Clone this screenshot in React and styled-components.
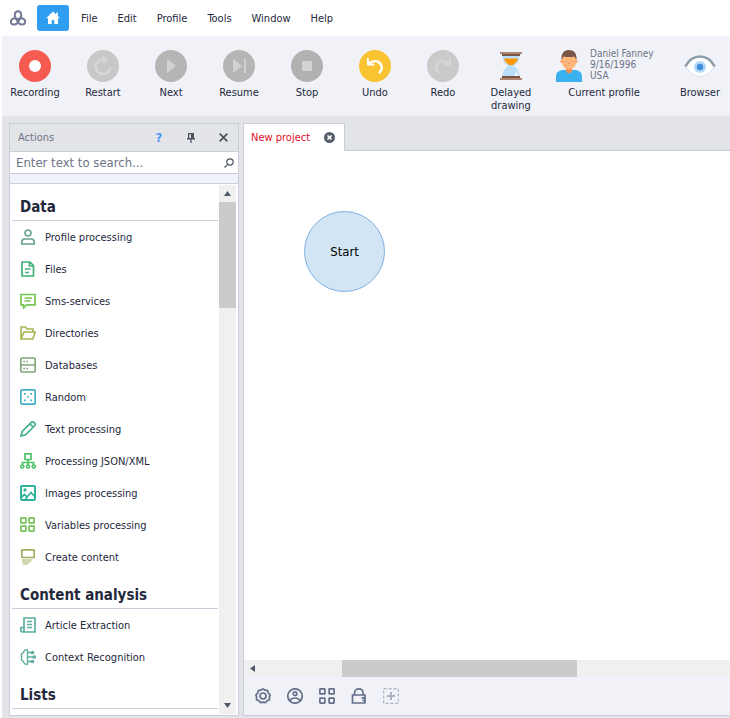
import React from 'react';
import styled, { createGlobalStyle } from 'styled-components';

const GlobalStyle = createGlobalStyle`
  * {
    box-sizing: border-box;
  }
  body {
    margin: 0;
    background: #fff;
    color: #24283c;
    font-family: 'DejaVu Sans Condensed', 'Noto Sans', sans-serif;
    font-size: 11px;
    line-height: 14px;
  }
  button,
  input {
    margin: 0;
    padding: 0;
    border: 0;
    background: none;
    color: inherit;
    font: inherit;
  }
  svg {
    display: block;
    flex: none;
  }
`;

const Page = styled.div`
  display: flex;
  flex-direction: column;
  height: 100vh;
  padding-left: 2px;
  overflow: hidden;
`;

const MenuBar = styled.nav`
  display: flex;
  align-items: center;
  flex: none;
  height: 36px;
  padding-left: 8px;
`;

const HomeButton = styled.button`
  display: flex;
  align-items: center;
  justify-content: center;
  width: 32px;
  height: 26px;
  margin: 0 2px 0 11px;
  border-radius: 3px;
  background: #2f9df0;
`;

const MenuItem = styled.button`
  padding: 1px 10px 0;
`;

const Toolbar = styled.header`
  display: flex;
  gap: 8px;
  flex: none;
  height: 80px;
  padding: 14px 0 0 3px;
  background: #f1f2f7;
  overflow: hidden;
`;

const Tool = styled.button`
  display: flex;
  flex-direction: column;
  align-items: center;
  gap: 4px;
  flex: none;
  width: ${p => p.$width || 60}px;
  height: 64px;
  line-height: 13px;
`;

const Profile = styled.span`
  display: flex;
  gap: 8px;
  align-self: flex-start;
  height: 32px;
  padding-left: 7px;
  color: #6d7488;
  font-size: 10px;
  line-height: 11px;
  text-align: left;
  white-space: nowrap;
`;

const ProfileText = styled.span`
  margin-top: -2px;
`;

const Workspace = styled.main`
  display: flex;
  flex: 1;
  gap: 4px;
  min-height: 0;
  padding: 7px 0 2px 7px;
  background: #e3e4e8;
`;

const Panel = styled.aside`
  display: flex;
  flex-direction: column;
  flex: none;
  width: 230px;
  border: 1px solid #c9cddc;
  background: #f1f2f7;
`;

const PanelTitle = styled.div`
  display: flex;
  align-items: center;
  flex: none;
  height: 27px;
  padding: 0 7px 0 8px;
  background: #e3e4e8;
  color: #6d7488;
`;

const PanelName = styled.span`
  flex: 1;
`;

const PanelButton = styled.button`
  display: flex;
  align-items: center;
  justify-content: center;
  width: 16px;
  height: 16px;
  margin-left: 16px;
  color: ${p => p.$color || '#4b535f'};
  font-size: 13px;
  font-weight: bold;
`;

const Search = styled.div`
  display: flex;
  align-items: center;
  flex: none;
  height: 23px;
  margin-bottom: 9px;
  padding: 0 4px 0 6px;
  border: 1px solid #c9cddc;
  border-width: 1px 0;
  background: #fff;
`;

const SearchInput = styled.input`
  flex: 1;
  min-width: 0;
  outline: 0;
  font-size: 13px;
  &::placeholder {
    color: #6d7488;
    opacity: 1;
  }
`;

const List = styled.div`
  display: flex;
  flex: 1;
  min-height: 0;
  padding: 1px 1px 1px 2px;
  border-top: 1px solid #c9cddc;
  background: #fff;
`;

const Groups = styled.div`
  flex: 1;
  overflow: hidden;
`;

const GroupName = styled.h2`
  height: 36px;
  margin: 0 1px 0 0;
  padding: 12px 0 0 8px;
  border-bottom: 1px solid #c9cddc;
  font-size: 15px;
  line-height: 20px;
`;

const Action = styled.button`
  display: flex;
  align-items: center;
  gap: 9px;
  width: 100%;
  height: 32px;
  padding-left: 8px;
`;

const ActionName = styled.span`
  padding-top: 1px;
`;

const VerticalBar = styled.div`
  display: flex;
  flex-direction: column;
  justify-content: space-between;
  width: 17px;
  margin-right: 1px;
  background: #f0f0f0;
`;

const ScrollButton = styled.button`
  display: flex;
  align-items: center;
  justify-content: center;
  flex: none;
  width: 17px;
  height: 17px;
  color: #4f5868;
`;

const VerticalThumb = styled.div`
  height: 20%;
  margin-bottom: auto;
  background: #cbcbcb;
`;

const Editor = styled.section`
  display: flex;
  flex-direction: column;
  flex: 1;
  min-width: 0;
`;

const Tabs = styled.div`
  display: flex;
  flex: none;
  height: 28px;
`;

const Tab = styled.div`
  display: flex;
  align-items: center;
  justify-content: space-between;
  width: 102px;
  padding: 0 9px 0 7px;
  border: 1px solid #c9cddc;
  border-bottom: 0;
  background: #fff;
  color: #e0102d;
`;

const TabRest = styled.div`
  flex: 1;
  border-bottom: 1px solid #c9cddc;
`;

const Canvas = styled.div`
  position: relative;
  flex: 1;
  border-left: 1px solid #c9cddc;
  background: #fff;
`;

const Node = styled.div`
  position: absolute;
  top: 60px;
  left: 60px;
  display: flex;
  align-items: center;
  justify-content: center;
  width: 81px;
  height: 81px;
  border: 1px solid #7fb0e2;
  border-radius: 50%;
  background: #d2e5f5;
  color: #000;
  font-size: 13px;
`;

const HorizontalBar = styled.div`
  display: flex;
  flex: none;
  height: 17px;
  border-left: 1px solid #c9cddc;
  background: #f0f0f0;
`;

const HorizontalThumb = styled.div`
  width: 235px;
  margin-left: 81px;
  background: #cbcbcb;
`;

const BottomBar = styled.footer`
  display: flex;
  align-items: center;
  gap: 16px;
  flex: none;
  height: 39px;
  padding-left: 11px;
  border: 1px solid #c9cddc;
  border-width: 0 0 1px 1px;
  background: #f1f2f7;
  color: #64708a;
`;

const Svg = ({ size = 16, box = 16, color = 'currentColor', width = 1.7, children }) => (
  <svg
    width={size}
    height={size}
    viewBox={`0 0 ${box} ${box}`}
    fill="none"
    stroke={color}
    strokeWidth={width}
    aria-hidden="true"
  >
    {children}
  </svg>
);

const Round = ({ color, children }) => (
  <Svg size={32} box={32} color="none">
    <circle cx="16" cy="16" r="16" fill={color} />
    {children}
  </Svg>
);

const Logo = () => (
  <Svg color="#727a94" width={2}>
    <path d="M8 11C5.600 9 4.500 6.500 4.900 4.200 5.500.4 10.500.4 11.100 4.200 11.500 6.500 10.400 9 8 11Z" />
    <path d="M9 9.800C8 13 5.800 14.800 3.600 14.600.5 14.400.1 11 2 9.200 3.700 7.800 6.500 8 9 9.800Z" />
    <path d="M7 9.800C8 13 10.200 14.800 12.400 14.600 15.500 14.400 15.900 11 14 9.200 12.300 7.800 9.500 8 7 9.800Z" />
  </Svg>
);

const tools = [
  {
    name: 'Recording',
    icon: (
      <Round color="#f65b51">
        <circle cx="16" cy="16" r="6" fill="#fff" />
      </Round>
    ),
  },
  {
    name: 'Restart',
    icon: (
      <Round color="#c8c8c8">
        <path d="M17 9.500A7.300 7.300 0 1 0 23.300 17" stroke="#d7d7d7" strokeWidth="2.500" />
        <path d="M15.500 5.500l6 4.500-6 4z" fill="#d7d7d7" />
      </Round>
    ),
  },
  {
    name: 'Next',
    icon: (
      <Round color="#b5b5b5">
        <path d="M12.500 9.500v13L20.500 16z" fill="#d2d2d2" stroke="#d2d2d2" strokeLinejoin="round" strokeWidth="1" />
      </Round>
    ),
  },
  {
    name: 'Resume',
    icon: (
      <Round color="#b5b5b5">
        <path d="M10.500 9.500v13L18.500 16z" fill="#d2d2d2" stroke="#d2d2d2" strokeLinejoin="round" strokeWidth="1" />
        <path d="M21 9h2v14h-2z" fill="#d2d2d2" />
      </Round>
    ),
  },
  {
    name: 'Stop',
    icon: (
      <Round color="#b1b1b1">
        <rect x="11" y="11" width="10" height="10" fill="#d2d2d2" />
      </Round>
    ),
  },
  {
    name: 'Undo',
    icon: (
      <Round color="#fac332">
        <path d="M10 13.500C13.500 10.800 18 10.300 20.800 13c3 3 2.500 7.500-.8 10.300" stroke="#fff" strokeWidth="2.500" />
        <path d="M8 8v7.500h7.500v-1.800l-5.200-.5L9.800 8z" fill="#fff" />
      </Round>
    ),
  },
  {
    name: 'Redo',
    icon: (
      <Round color="#cacaca">
        <path d="M22 13.500C18.500 10.800 14 10.300 11.200 13c-3 3-2.500 7.500.8 10.300" stroke="#d6d6d6" strokeWidth="2.500" />
        <path d="M24 8v7.500h-7.500v-1.800l5.200-.5.500-5.200z" fill="#d6d6d6" />
      </Round>
    ),
  },
  {
    name: 'Delayed drawing',
    icon: (
      <Svg size={32} box={32} color="none">
        <path d="M7.500 6h17c0 5-2 7.500-6 10 4 2.500 6 5 6 10h-17c0-5 2-7.500 6-10-4-2.500-6-5-6-10z" fill="#bbdefb" />
        <path d="M9 8.500h14c-.5 3-3 4.500-5 6.500h-4c-2-2-4.500-3.500-5-6.500z" fill="#ff9800" />
        <path d="M21.500 20l2 6h-4z" fill="#eaf5ff" />
        <path d="M5 2h22v2H5zM5 28h22v2H5z" fill="#b08570" />
        <path d="M7 4h18v2H7zM7 26h18v2H7z" fill="#795548" />
      </Svg>
    ),
  },
  {
    name: 'Current profile',
    width: 110,
    icon: (
      <Profile>
        <svg width="26" height="32" viewBox="0 0 26 32" aria-hidden="true">
          <path d="M0 32v-5c0-5 3-7 8-7h10c5 0 8 2 8 7v5z" fill="#3bb1f0" />
          <path d="M10 17h6v4c0 3-6 3-6 0z" fill="#f18e55" />
          <path d="M6 5h14v7c0 4-3 7.500-7 7.500S6 16 6 12z" fill="#ffb77c" />
          <circle cx="5.800" cy="11.500" r="1.600" fill="#ffa56c" />
          <circle cx="20.200" cy="11.500" r="1.600" fill="#ffa56c" />
          <path d="M5.500 10C5 4 7.500 0 13 0s8 4 7.500 10l-2-3.500c-4 1-8 .5-11 0z" fill="#795548" />
          <path d="M9.500 11h1.200v1H9.500zM15.500 11h1.200v1h-1.200zM12.500 13h1v1h-1zM9.500 15h1v1h-1z" fill="#e58a58" />
        </svg>
        <ProfileText>
          Daniel Fanney
          <br />
          9/16/1996
          <br />
          USA
        </ProfileText>
      </Profile>
    ),
  },
  {
    name: 'Browser',
    width: 66,
    icon: (
      <Svg size={32} box={32} color="none">
        <path d="M2 17C6 10 11 7.500 16 7.500S26 10 30 17c-4 6.500-9 9.500-14 9.500S6 23.500 2 17z" fill="#fff" stroke="#d8dde4" strokeWidth="1" />
        <circle cx="16" cy="17" r="6" fill="#b3dafa" />
        <circle cx="16" cy="17" r="3.200" fill="#3f8fdc" />
        <path d="M1.300 16.500C5 9.500 10.500 6.500 16 6.500s11 3 14.700 10" stroke="#8f9fab" strokeWidth="2.600" />
      </Svg>
    ),
  },
];

const groups = [
  {
    name: 'Data',
    actions: [
      {
        name: 'Profile processing',
        color: '#68a48f',
        icon: (
          <>
            <circle cx="8" cy="4" r="3" />
            <path d="M1.800 15v-2c0-2 1-3 3-3h6.400c2 0 3 1 3 3v2z" />
          </>
        ),
      },
      {
        name: 'Files',
        color: '#41b377',
        icon: <path d="M2 1h8l3.500 3.500V15H2zM9.500 1v4h4M5 8h5.500M5 11.500h4" />,
      },
      {
        name: 'Sms-services',
        color: '#76c653',
        icon: <path d="M1 1.500h14v10.300H6.500L3.500 15v-3.200H1zM4.500 5h7.500M4.500 8h6" />,
      },
      {
        name: 'Directories',
        color: '#a3b957',
        icon: <path d="M1 14V2h4.500l1.500 2h6v3M1 14l3-7h11.200l-2.500 7z" />,
      },
      {
        name: 'Databases',
        color: '#83a77a',
        icon: (
          <>
            <rect x=".8" y="1" width="14.400" height="14" rx="1.500" />
            <path d="M1 8h14M3.300 4.500H5M6.300 4.500H8M3.300 11.500H5M6.300 11.500H8" />
          </>
        ),
      },
      {
        name: 'Random',
        color: '#41b0c3',
        icon: (
          <>
            <rect x=".8" y=".8" width="14.400" height="14.400" rx="1.500" />
            <path d="M4 4.800h1.700M10.300 4.800H12M7.100 8h1.800M4 11.300h1.700M10.300 11.300H12" />
          </>
        ),
      },
      {
        name: 'Text processing',
        color: '#43b08d',
        icon: <path d="M1 15l1.200-4.500L11.500 1.200c.8-.6 1.700-.5 2.400.2l.7.700c.7.700.8 1.600.2 2.400L5.500 13.800zM10 3l3 3" />,
      },
      {
        name: 'Processing JSON/XML',
        color: '#50c268',
        icon: (
          <>
            <path d="M5 .8h6v5.700H5zM8 6.500V12M2.500 12V9.500h11V12" />
            <circle cx="2.300" cy="13.500" r="1.500" />
            <circle cx="8" cy="13.500" r="1.500" />
            <circle cx="13.700" cy="13.500" r="1.500" />
          </>
        ),
      },
      {
        name: 'Images processing',
        color: '#2eb39b',
        icon: (
          <>
            <rect x="1" y="1" width="14" height="14" rx="1" strokeWidth="2" />
            <circle cx="5" cy="5" r=".8" />
            <path d="M1 12.500L4.500 9.500 7 12l4-4.500 4 4.500M5 15l2-3" />
          </>
        ),
      },
      {
        name: 'Variables processing',
        color: '#75c356',
        icon: (
          <>
            <rect x=".9" y=".9" width="5" height="5" rx=".5" />
            <rect x="9.100" y=".9" width="5" height="5" rx=".5" />
            <rect x=".9" y="9.100" width="5" height="5" rx=".5" />
            <rect x="9.100" y="9.100" width="5" height="5" rx=".5" />
          </>
        ),
      },
      {
        name: 'Create content',
        color: '#a2ad61',
        icon: (
          <>
            <rect x="1.800" y=".8" width="12.400" height="7.700" rx=".5" />
            <path d="M2 11h10.500M2 13h8.500M3 15h5" strokeWidth="1.200" />
          </>
        ),
      },
    ],
  },
  {
    name: 'Content analysis',
    actions: [
      {
        name: 'Article Extraction',
        color: '#5aaf9c',
        icon: <path d="M4 10V1h11v14H3C.5 15 .8 13.500 .8 10.500H4V15M7 4.500h5M7 7.500h5M7 10.500h5" />,
      },
      {
        name: 'Context Recognition',
        color: '#5fae9e',
        icon: (
          <>
            <path
              d="M8 1C5.500.2 3.800 1.500 3.500 3.500 1.500 4.300.8 6 1.800 8 .8 10 1.500 11.800 3.500 12.500 3.800 14.700 5.500 15.800 8 15M7.500 .5v15M8 3.500h3.500M8 8h5M8 12.500h3.500"
              strokeWidth="1.400"
            />
            <circle cx="12.500" cy="3.500" r="1" />
            <circle cx="14.200" cy="8" r="1" />
            <circle cx="12.500" cy="12.500" r="1" />
          </>
        ),
      },
    ],
  },
  { name: 'Lists', actions: [] },
];

const bottomIcons = [
  {
    name: 'Settings',
    icon: (
      <>
        <path d="M8 .9l2 1.300 2.500.3.700 2.400L15.100 7l-.7 2.200.1 2.500-2.300 1L10.500 14.600 8 14.200l-2.500.4-1.700-1.900-2.300-1 .1-2.500L.9 7l1.900-2.100.7-2.400L6 2.200z" />
        <circle cx="8" cy="8" r="3" />
      </>
    ),
  },
  {
    name: 'Profile',
    icon: (
      <>
        <circle cx="8" cy="8" r="7.200" />
        <circle cx="8" cy="5.700" r="1.800" />
        <path d="M3 13.200c.6-2.500 2-3.200 5-3.200s4.400.7 5 3.200" />
      </>
    ),
  },
  {
    name: 'Blocks',
    icon: (
      <>
        <rect x=".9" y=".9" width="5" height="5" rx=".5" />
        <rect x="10.100" y=".9" width="5" height="5" rx=".5" />
        <rect x=".9" y="10.100" width="5" height="5" rx=".5" />
        <rect x="10.100" y="10.100" width="5" height="5" rx=".5" />
      </>
    ),
  },
  {
    name: 'Lock',
    icon: <path d="M1.500 7h12.500v8H1.500zM3.500 7V5c0-5.500 8.500-5.500 8.500 0v2M10.500 9.800h4M11.500 12.300h3" />,
  },
  {
    name: 'Add',
    color: '#a7b2c4',
    icon: (
      <>
        <rect x=".7" y=".7" width="14.600" height="14.600" strokeWidth="1.200" strokeDasharray="3 1.870" />
        <path d="M8 4v8M4 8h8" strokeWidth="2" />
      </>
    ),
  },
];

const Arrow = ({ d }) => (
  <svg width="7" height="7" viewBox="0 0 7 7" fill="currentColor" aria-hidden="true">
    <path d={d} />
  </svg>
);

export default function App() {
  return (
    <>
      <GlobalStyle />
      <Page>
        <MenuBar>
          <Logo />
          <HomeButton aria-label="Home">
            <Svg color="none">
              <path d="M8 1.500L1 8.300h2V14h3.700v-4h2.600v4H13V8.300h2l-2.200-2.200V2.500h-1.600v2z" fill="#fff" />
            </Svg>
          </HomeButton>
          {['File', 'Edit', 'Profile', 'Tools', 'Window', 'Help'].map(item => (
            <MenuItem key={item}>{item}</MenuItem>
          ))}
        </MenuBar>
        <Toolbar>
          {tools.map(({ name, icon, width }) => (
            <Tool key={name} $width={width}>
              {icon}
              <span>{name}</span>
            </Tool>
          ))}
        </Toolbar>
        <Workspace>
          <Panel>
            <PanelTitle>
              <PanelName>Actions</PanelName>
              <PanelButton $color="#4a98f5">?</PanelButton>
              <PanelButton aria-label="Pin">
                <svg width="8" height="10" viewBox="0 0 8 10" fill="currentColor" aria-hidden="true">
                  <path d="M1 0h6v5h1v1.500H4.600V10H3.400V6.500H0V5h1zM2.300 1.200V5H4V1.200z" />
                </svg>
              </PanelButton>
              <PanelButton aria-label="Close">
                <Svg size={9} box={9}>
                  <path d="M.7.7l7.600 7.600M8.300.7L.7 8.300" />
                </Svg>
              </PanelButton>
            </PanelTitle>
            <Search>
              <SearchInput aria-label="Search actions" placeholder="Enter text to search..." />
              <Svg size={10} box={10} color="#4b535f" width={1.200}>
                <circle cx="6" cy="4" r="3.200" />
                <path d="M3.700 6.300L.5 9.500" />
              </Svg>
            </Search>
            <List>
              <Groups>
                {groups.map(group => (
                  <div key={group.name}>
                    <GroupName>{group.name}</GroupName>
                    {group.actions.map(action => (
                      <Action key={action.name}>
                        <Svg color={action.color}>{action.icon}</Svg>
                        <ActionName>{action.name}</ActionName>
                      </Action>
                    ))}
                  </div>
                ))}
              </Groups>
              <VerticalBar>
                <ScrollButton aria-label="Scroll up">
                  <Arrow d="M3.500 1L7 6H0z" />
                </ScrollButton>
                <VerticalThumb />
                <ScrollButton aria-label="Scroll down">
                  <Arrow d="M3.500 6L7 1H0z" />
                </ScrollButton>
              </VerticalBar>
            </List>
          </Panel>
          <Editor>
            <Tabs>
              <Tab>
                New project
                <button aria-label="Close tab">
                  <Svg size={11} box={11} color="#fff">
                    <circle cx="5.500" cy="5.500" r="5.500" fill="#555e6b" stroke="none" />
                    <path d="M3.500 3.500l4 4M7.500 3.500l-4 4" />
                  </Svg>
                </button>
              </Tab>
              <TabRest />
            </Tabs>
            <Canvas>
              <Node>Start</Node>
            </Canvas>
            <HorizontalBar>
              <ScrollButton aria-label="Scroll left">
                <Arrow d="M1 3.500L6 0v7z" />
              </ScrollButton>
              <HorizontalThumb />
            </HorizontalBar>
            <BottomBar>
              {bottomIcons.map(({ name, icon, color }) => (
                <button key={name} aria-label={name}>
                  <Svg color={color}>{icon}</Svg>
                </button>
              ))}
            </BottomBar>
          </Editor>
        </Workspace>
      </Page>
    </>
  );
}
